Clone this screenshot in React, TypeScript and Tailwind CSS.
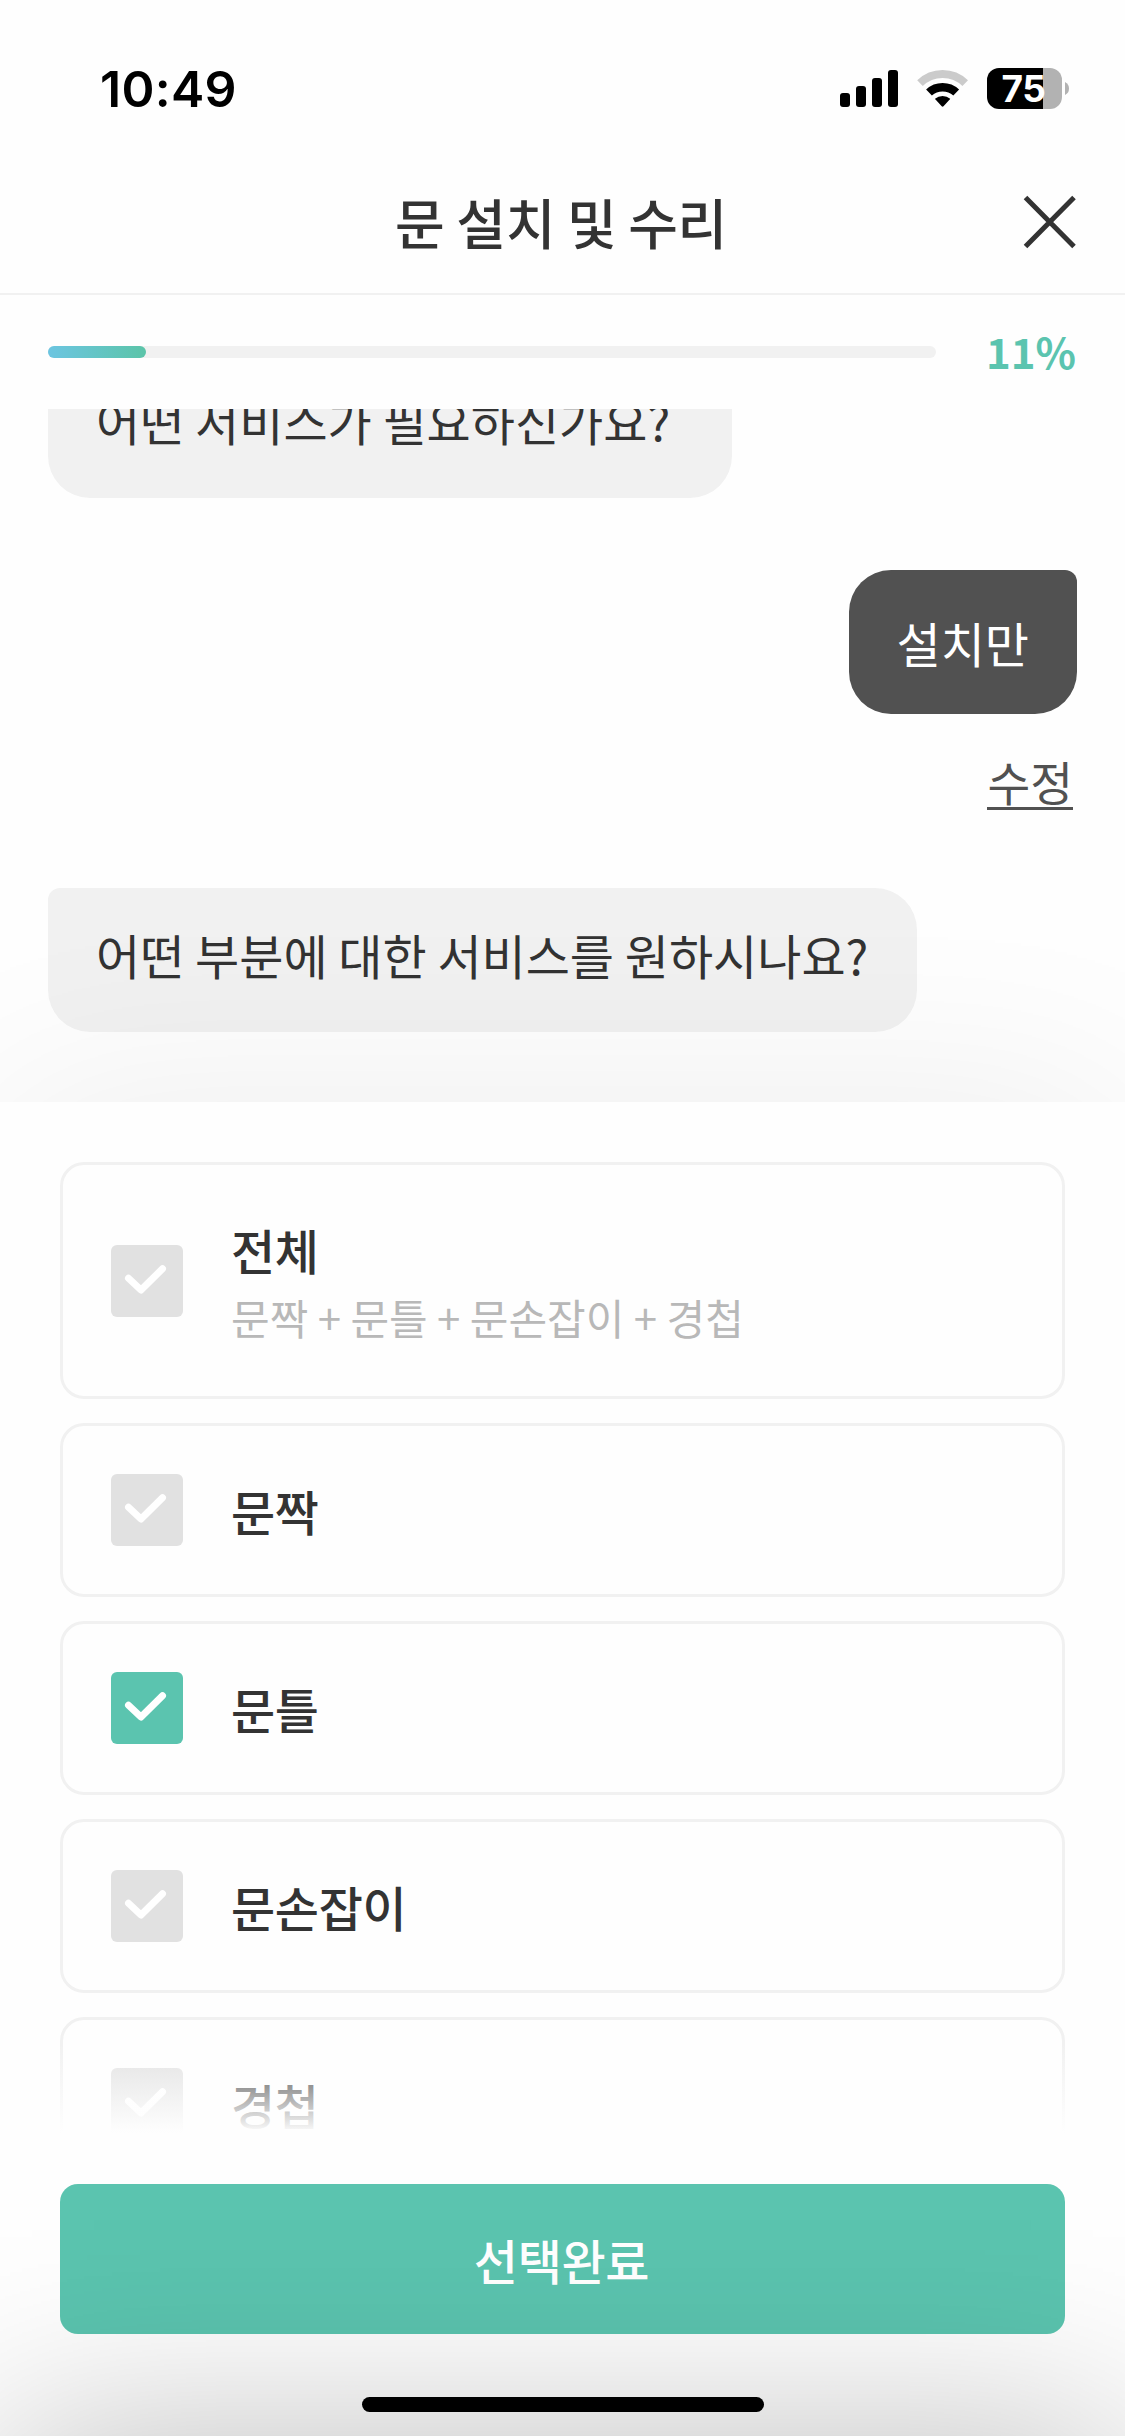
import { useState } from 'react';

const options = [
  { id: 'all', label: '전체', description: '문짝 + 문틀 + 문손잡이 + 경첩' },
  { id: 'door', label: '문짝' },
  { id: 'frame', label: '문틀' },
  { id: 'handle', label: '문손잡이' },
  { id: 'hinge', label: '경첩' },
];

function StatusBar() {
  return (
    <div className="flex h-[132px] items-start justify-between pl-[100px] pr-[56px] pt-[68px]">
      <span className="-mt-[9px] font-['Inter',sans-serif] text-[50px] font-semibold leading-[60px] tracking-[0.3px] text-black">10:49</span>
      <svg width="229" height="41" viewBox="840 68 229 41" className="block">
        {/* signal */}
        <rect x="840" y="93" width="10" height="14" rx="3" />
        <rect x="856" y="86" width="10" height="21" rx="3" />
        <rect x="872" y="78" width="10" height="29" rx="3" />
        <rect x="888" y="70" width="10" height="37" rx="3" />
        {/* wifi */}
        <path d="M920 83.200a32.500 32.500 0 0 1 45.200 0" fill="none" stroke="#cbcbcb" strokeWidth="8" />
        <path d="M929 92.500a20 20 0 0 1 27.200 0" fill="none" stroke="#000" strokeWidth="8.500" />
        <path d="M935 98.800a11.500 11.500 0 0 1 15.200 0Q950 99.300 949 100.300L943.500 106.300Q942.600 107.200 941.700 106.300L936.200 100.300Q935.200 99.300 935 98.800Z" />
        {/* battery */}
        <clipPath id="battery">
          <rect x="987" y="68" width="75" height="41" rx="12" />
        </clipPath>
        <g clipPath="url(#battery)">
          <rect x="987" y="68" width="56" height="41" />
          <rect x="1043" y="68" width="19" height="41" fill="#b2b2b2" />
        </g>
        <path d="M1065 82q4 2 4 6.500t-4 6.500z" fill="#b2b2b2" />
        <text x="1023.500" y="102" textAnchor="middle" fill="#fff" fontSize="37" fontWeight="700" fontFamily="Inter, sans-serif" letterSpacing="-0.5">75</text>
      </svg>
    </div>
  );
}

function CheckBox({ checked }: { checked: boolean }) {
  return (
    <span className={`block size-[72px] shrink-0 rounded-md ${checked ? 'bg-[#5bc4af]' : 'bg-[#e1e1e1]'}`}>
      <svg width="72" height="72" viewBox="0 0 72 72" fill="none" stroke="#fff" strokeWidth="7" strokeLinecap="round" strokeLinejoin="round">
        <path d="M17.500 33.200L30 45L51.500 23.800" />
      </svg>
    </span>
  );
}

export default function App() {
  const [selected, setSelected] = useState('frame');

  return (
    <div className="relative flex h-[2436px] w-[1125px] flex-col overflow-hidden bg-[#fefefe] font-['Noto_Sans_CJK_KR',sans-serif] text-[#333333]">
      <StatusBar />

      {/* Header */}
      <header className="flex h-[163px] items-center justify-between border-b-2 border-[#f1f1f1] px-12 pt-[18px]">
        <span className="w-[51px]" />
        <h1 className="text-[54px] font-medium leading-[78px] tracking-[-0.3px]">문 설치 및 수리</h1>
        <button aria-label="닫기">
          <svg width="54" height="54" viewBox="0 0 54 54" stroke="#333" strokeWidth="5" fill="none">
            <path d="M2.500 2.500L51 51.500M51 2.500L2.500 51.500" />
          </svg>
        </button>
      </header>

      {/* Progress */}
      <div className="flex h-[114px] items-center justify-between pl-12 pr-[49px]">
        <div className="h-3 w-[888px] rounded-full bg-[#f1f1f1]">
          <div className="h-3 rounded-full bg-gradient-to-r from-[#6cc5e1] to-[#5bc4a8]" style={{ width: '11%' }} />
        </div>
        <span className="-mt-0.5 text-[42px] font-bold leading-[60px] text-[#5bc4af]">11%</span>
      </div>

      {/* Chat */}
      <div className="flex h-[693px] flex-col justify-end overflow-hidden px-12 pb-[70px]">
        <div className="w-[684px] shrink-0 self-start rounded-[42px] rounded-tl-xl bg-[#f1f1f1] px-12 pb-[42px] pt-[30px] text-[48px] leading-[72px]">
          어떤 서비스가 필요하신가요?
        </div>
        <div className="mt-[72px] shrink-0 self-end rounded-[42px] rounded-tr-xl bg-[#515151] px-12 py-9 text-[48px] leading-[72px] text-white">
          설치만
        </div>
        <button className="mr-1 mt-10 shrink-0 self-end border-b-[3px] border-[#515151] text-[46.500px] leading-[53px] text-[#515151]">
          수정
        </button>
        <div className="mt-[78px] w-[869px] shrink-0 self-start whitespace-nowrap rounded-[42px] rounded-tl-xl bg-[#f1f1f1] px-12 pb-[42px] pt-[30px] text-[48px] leading-[72px]">
          어떤 부분에 대한 서비스를 원하시나요?
        </div>
      </div>

      {/* Answer panel */}
      <div className="relative flex flex-1 flex-col bg-[#fefefe] px-[60px] shadow-[0_0_200px_rgba(0,0,0,0.07)]">
        <div className="relative h-[1031px] overflow-hidden pt-[60px]">
          <div className="flex flex-col gap-6">
            {options.map((option) => (
              <button
                key={option.id}
                onClick={() => setSelected(option.id)}
                className={`flex w-full items-center gap-12 rounded-3xl border-[3px] border-[#f1f1f1] px-12 text-left ${option.description ? 'h-[237px]' : 'h-[174px]'}`}
              >
                <CheckBox checked={selected === option.id} />
                <span className="flex flex-col">
                  <span className="text-[48px] font-medium leading-[72px] tracking-[-0.3px]">{option.label}</span>
                  {option.description && (
                    <span className="text-[42px] leading-[63px] text-[#b8b8b8]">{option.description}</span>
                  )}
                </span>
              </button>
            ))}
          </div>
          <div className="absolute inset-x-0 bottom-0 h-[90px] bg-gradient-to-b from-[#fefefe]/0 to-[#fefefe]" />
        </div>
        <button className="mt-[51px] h-[150px] w-full rounded-[18px] bg-[#5bc4af] pr-0.5 text-[48px] font-medium leading-[72px] tracking-[-0.3px] text-white">
          선택완료
        </button>
      </div>

      {/* Shade over the bottom edge */}
      <div className="pointer-events-none absolute left-0 top-full h-[600px] w-full shadow-[0_0_190px_rgba(0,0,0,0.25)]" />
      <div className="absolute bottom-6 left-[362px] h-[15px] w-[402px] rounded-full bg-black" />
    </div>
  );
}
